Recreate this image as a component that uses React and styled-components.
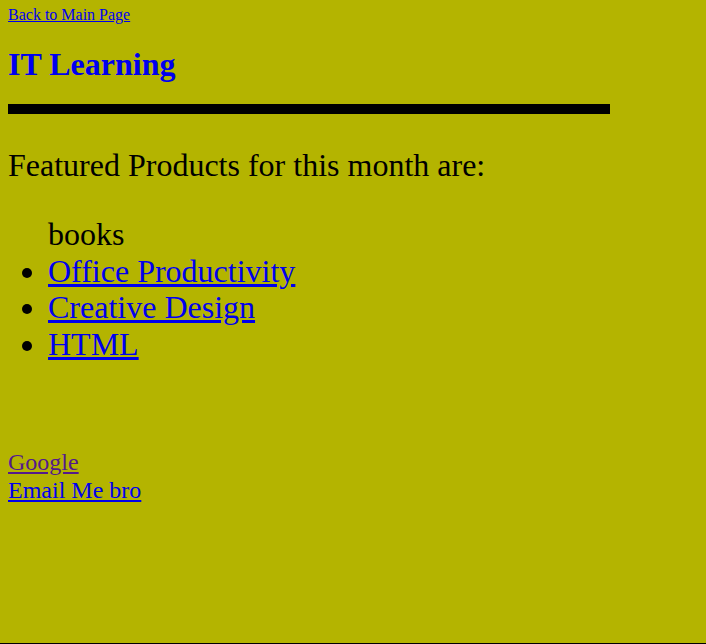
import React from "react";
import styled, { createGlobalStyle } from "styled-components";

const Global = createGlobalStyle`
  html {
    min-height: 100%;
    box-sizing: border-box;
    border-bottom: 1px solid #000;
    background: #b4b400;
  }
  body {
    margin: 8px;
    font-family: "Liberation Serif", "Times New Roman", serif;
    color: #000;
  }
`;

const Page = styled.div`
  display: flex;
  flex-direction: column;
  align-items: flex-start;
`;

const BackLink = styled.a`
  font-size: 16px;
  line-height: 13px;
  color: #0000ee;
  text-decoration: underline;
`;

const Title = styled.h1`
  margin: 25px 0 0;
  font-size: 32px;
  line-height: 37px;
  font-weight: bold;
  color: #0000ee;
`;

const Rule = styled.div`
  margin-top: 21px;
  width: 602px;
  height: 10px;
  background: #000;
`;

const Intro = styled.p`
  margin: 33px 0 0;
  font-size: 32px;
  line-height: 36.8px;
`;

const List = styled.ul`
  margin: 32px 0 0;
  padding-left: 40px;
  font-size: 32px;
  line-height: 36.8px;
`;

const Item = styled.li`
  list-style: ${(p) => (p.$plain ? "none" : "disc")};
`;

const ItemLink = styled.a`
  color: #0000ee;
  text-decoration: underline;
`;

const Footer = styled.div`
  margin-top: 86px;
  display: flex;
  flex-direction: column;
  align-items: flex-start;
  font-size: 24px;
  line-height: 27.6px;
`;

const FootLink = styled.a`
  color: ${(p) => (p.$visited ? "#551a8b" : "#0000ee")};
  text-decoration: underline;
`;

export default function App() {
  return (
    <>
      <Global />
      <Page>
        <BackLink href="#">Back to Main Page</BackLink>
        <Title>IT Learning</Title>
        <Rule />
        <Intro>Featured Products for this month are:</Intro>
        <List>
          <Item $plain>books</Item>
          <Item>
            <ItemLink href="#">Office Productivity</ItemLink>
          </Item>
          <Item>
            <ItemLink href="#">Creative Design</ItemLink>
          </Item>
          <Item>
            <ItemLink href="#">HTML</ItemLink>
          </Item>
        </List>
        <Footer>
          <FootLink href="#" $visited>
            Google
          </FootLink>
          <FootLink href="#">Email Me bro</FootLink>
        </Footer>
      </Page>
    </>
  );
}
